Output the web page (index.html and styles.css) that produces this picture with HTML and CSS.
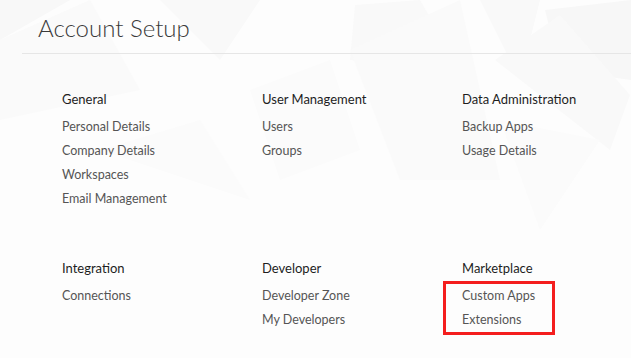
FILE: index.html
```html
<!DOCTYPE html>
<html>
<head>
<meta charset="utf-8">
<link rel="stylesheet" href="styles.css">
</head>
<body>
<svg class="bg" width="631" height="358" viewBox="0 0 631 358" aria-hidden="true">
  <polygon points="0,0 70,0 0,40" fill="#f8f8f8"/>
  <polygon points="0,40 90,0 140,90 0,120" fill="#fafafa"/>
  <polygon points="160,0 260,0 220,60" fill="#f9f9f9"/>
  <polygon points="355,5 420,0 460,70 350,60" fill="#f9f9f9"/>
  <polygon points="350,50 460,0 500,180 400,180" fill="#fafafa"/>
  <polygon points="480,0 540,0 520,80" fill="#f9f9f9"/>
  <polygon points="545,10 631,0 631,80 560,70" fill="#f7f7f7"/>
  <polygon points="495,60 560,15 630,95 610,150" fill="#f9f9f9"/>
  <polygon points="250,90 330,60 360,150 280,180" fill="#fbfbfb"/>
  <polygon points="100,150 200,120 250,200" fill="#fbfbfb"/>
  <polygon points="500,120 600,140 540,230" fill="#fbfbfb"/>
</svg>
<div class="page">
  <header class="top">
    <h1 class="title">Account Setup</h1>
  </header>
  <main class="grid">
    <section class="group">
      <h2 class="group-title">General</h2>
      <a class="link">Personal Details</a>
      <a class="link">Company Details</a>
      <a class="link">Workspaces</a>
      <a class="link">Email Management</a>
    </section>
    <section class="group">
      <h2 class="group-title">User Management</h2>
      <a class="link">Users</a>
      <a class="link">Groups</a>
    </section>
    <section class="group">
      <h2 class="group-title">Data Administration</h2>
      <a class="link">Backup Apps</a>
      <a class="link">Usage Details</a>
    </section>
    <section class="group">
      <h2 class="group-title">Integration</h2>
      <a class="link">Connections</a>
    </section>
    <section class="group">
      <h2 class="group-title">Developer</h2>
      <a class="link">Developer Zone</a>
      <a class="link">My Developers</a>
    </section>
    <section class="group">
      <h2 class="group-title">Marketplace</h2>
      <div class="highlight">
        <a class="link">Custom Apps</a>
        <a class="link">Extensions</a>
      </div>
    </section>
  </main>
</div>
</body>
</html>
```

FILE: styles.css
```css
html, body {
  margin: 0;
  padding: 0;
}
body {
  background: #fdfdfd;
  font-family: Lato, "Open Sans", sans-serif;
  width: 631px;
  height: 358px;
  overflow: hidden;
  position: relative;
}
.bg {
  position: absolute;
  left: 0;
  top: 0;
  z-index: 0;
}
.page {
  position: relative;
  z-index: 1;
}
.top {
  margin-left: 22px;
  border-bottom: 1px solid #e6e6e6;
  height: 54px;
  box-sizing: border-box;
}
.title {
  margin: 0;
  padding: 14px 0 0 16px;
  font-size: 24px;
  font-weight: 300;
  line-height: 28px;
  color: #3a3a3a;
}
.grid {
  display: grid;
  grid-template-columns: 200px 200px 200px;
  row-gap: 45px;
  padding: 33px 0 0 62px;
}
.group {
  display: flex;
  flex-direction: column;
  align-items: flex-start;
}
.group-title {
  margin: 0 0 4px 0;
  font-size: 13px;
  font-weight: 400;
  line-height: 24px;
  color: #1e1e1e;
}
.link {
  font-size: 12.5px;
  line-height: 24px;
  color: #555555;
  text-decoration: none;
}
.highlight {
  display: flex;
  flex-direction: column;
  border: 3px solid #f41e1e;
  margin: -3px 0 0 -19px;
  padding: 0 0 0 16px;
  width: 90px;
}
```
